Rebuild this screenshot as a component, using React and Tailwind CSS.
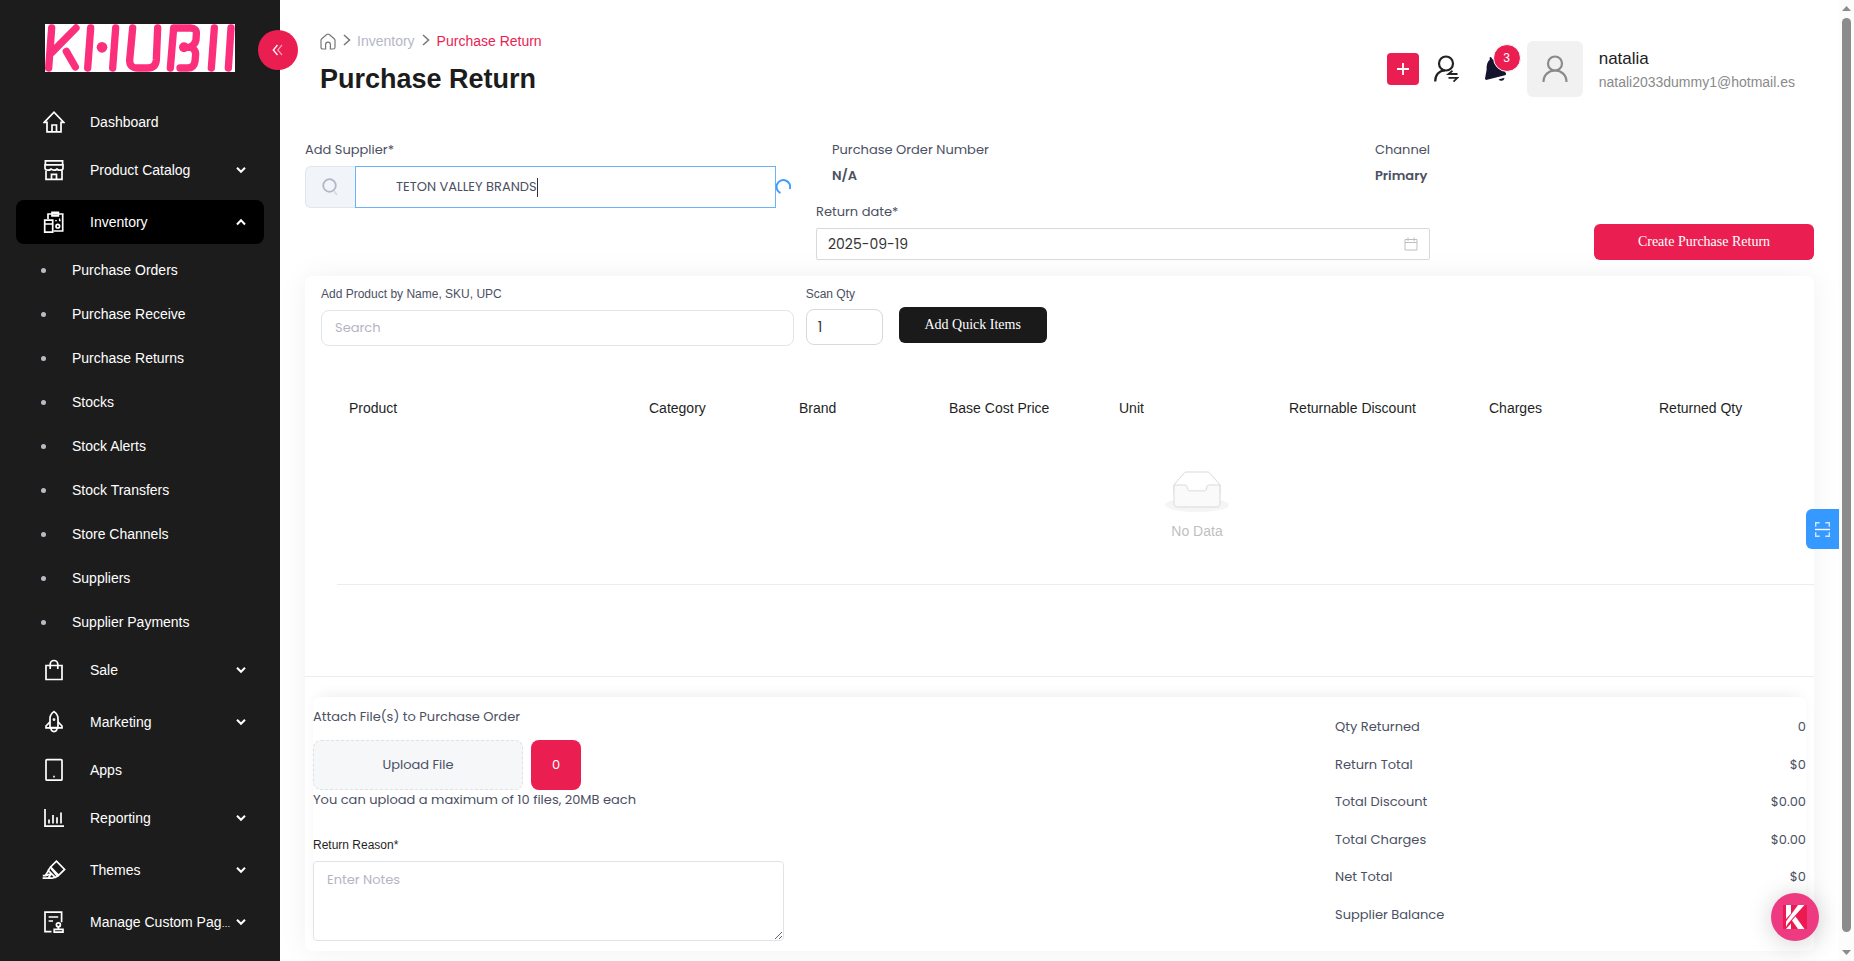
import React from 'react';

const stroke = { fill: 'none', stroke: 'currentColor', strokeWidth: 1.7 };

function HomeIcon() {
  return (
    <svg width="22" height="24" viewBox="0 0 22 24" {...stroke}>
      <path d="M1.2 12.4 11 2.2l9.8 10.2H18v9.4H4v-9.4z" />
      <path d="M9 21.5V15h4.5v6.5" />
    </svg>
  );
}
function StoreIcon() {
  return (
    <svg width="22" height="24" viewBox="0 0 22 24" {...stroke}>
      <path d="M2.4 2.8h17.200v4H2.400zM2 6.800h18v3.400c0 1.200-1.400 2-3 2s-3-.8-3-2c0 1.200-1.400 2-3 2s-3-.8-3-2c0 1.200-1.400 2-3 2s-3-.8-3-2z" />
      <path d="M3 12.600v8.800h16v-8.800M8.500 21.400v-5h5v5" />
    </svg>
  );
}
function InventoryIcon() {
  return (
    <svg width="22" height="24" viewBox="0 0 22 24" {...stroke}>
      <path d="M5 9V4h14.7v17H10.5M9 4V2.4h6.4v3.4H9V4" />
      <path d="M1.7 10.2h8v12h-8zM1.7 14h8" />
      <circle cx="14.8" cy="16.2" r="1.8" />
      <path d="M12.2 10.6h1.6M16 10.6h1.6M16.6 8.6v2" strokeWidth="1.4" />
    </svg>
  );
}
function BagIcon() {
  return (
    <svg width="22" height="24" viewBox="0 0 22 24" {...stroke}>
      <path d="M3 7.5h16v14H3zM7.2 11V6.3a3.8 3.8 0 0 1 7.6 0V11" />
    </svg>
  );
}
function RocketIcon() {
  return (
    <svg width="22" height="24" viewBox="0 0 22 24" {...stroke}>
      <path d="M7 17.6V8.4C7 5.6 9 3 11 1.6c2 1.4 4 4 4 6.8v9.2z" />
      <path d="M7 11.8 3 16v1.8h16V16l-4-4.2M8 17.8c0 2.2 1.4 3.8 3 3.8s3-1.6 3-3.8" />
      <circle cx="11" cy="9.6" r=".6" />
    </svg>
  );
}
function TabletIcon() {
  return (
    <svg width="22" height="24" viewBox="0 0 22 24" {...stroke}>
      <rect x="3" y="1.6" width="16" height="20.6" rx="1" />
      <path d="M10.2 18.6h1.6" />
    </svg>
  );
}
function ChartIcon() {
  return (
    <svg width="22" height="24" viewBox="0 0 22 24" {...stroke}>
      <path d="M2 3v17.2h19M6 17.4v-4M10 17.4V9M14 17.4v-6.2M18 17.4V6.6" />
    </svg>
  );
}
function BrushIcon() {
  return (
    <svg className="shrink-0" width="24" height="24" viewBox="0 0 24 24" {...stroke}>
      <path d="M14.400 3.200 22.600 11.400l-6 6-8-8.400z" />
      <path d="M8.800 9 6.200 12.400l7 7 3.400-2M9.400 10.800l5.800 7.200M6.400 12.800 3.200 17.600H.8M.6 20.200h9.600l3-1M3.600 17.800l5.400-2.200M6.600 19.600l2.600-3.600" />
    </svg>
  );
}
function PageIcon() {
  return (
    <svg width="22" height="24" viewBox="0 0 22 24" {...stroke}>
      <path d="M8.5 21.6H2V2.2h16.6v10M5.6 7h9.6M5.6 11h4.4" />
      <circle cx="15.4" cy="14.8" r="2" />
      <path d="M15.4 16.8v2.4M11.2 19.4h8.8v2.8h-8.8z" />
    </svg>
  );
}

function Chevron({ up }) {
  return (
    <svg className="shrink-0" width="10" height="10" viewBox="0 0 10 10" fill="none" stroke="currentColor" strokeWidth="2">
      {up ? <path d="M1 7.5 5 3.2l4 4.3" /> : <path d="M1 2.8 5 6.8l4-4" />}
    </svg>
  );
}

const inventoryLinks = [
  'Purchase Orders',
  'Purchase Receive',
  'Purchase Returns',
  'Stocks',
  'Stock Alerts',
  'Stock Transfers',
  'Store Channels',
  'Suppliers',
  'Supplier Payments',
];

const menuTop = [
  { label: 'Dashboard', icon: HomeIcon },
  { label: 'Product Catalog', icon: StoreIcon, group: true },
];
const menuBottom = [
  { label: 'Sale', icon: BagIcon, group: true },
  { label: 'Marketing', icon: RocketIcon, group: true, last: true },
  { label: 'Apps', icon: TabletIcon },
  { label: 'Reporting', icon: ChartIcon, group: true },
  { label: 'Themes', icon: BrushIcon, group: true },
  { label: 'Manage Custom Pag', icon: PageIcon, group: true, shortened: true },
];

function MenuItem({ item, open }) {
  const Icon = item.icon;
  const cls =
    'flex h-11 w-full shrink-0 items-center rounded-lg pr-[18px] pl-[27px] text-left text-sm text-white ' +
    (open ? 'bg-black ' : '');
  const body = (
    <>
      <span className="flex w-[22px] shrink-0 justify-center">
        <Icon />
      </span>
      <span className="ml-[25px] min-w-0 flex-1 whitespace-nowrap">
        {item.label}
        {item.shortened && <span className="text-[9px]">…</span>}
      </span>
      {item.group && <Chevron up={open} />}
    </>
  );
  return (
    <li className={item.group && !item.last && !open ? 'pb-1' : ''}>
      {item.group ? (
        <button type="button" className={cls}>
          {body}
        </button>
      ) : (
        <a href="#" className={cls}>
          {body}
        </a>
      )}
    </li>
  );
}

function Logo() {
  return (
    <svg className="block" width="190" height="48" viewBox="0 0 570 144" role="img" aria-label="Khubii">
      <rect width="570" height="144" fill="#fff" />
      <g fill="none" stroke="#fb2f7b" strokeWidth="22" strokeLinecap="round" strokeLinejoin="round">
        <path d="M20 12 11 132M93 12 20 86M64 82 91 129" />
        <path d="M137 12 128 132M212 12 203 132" />
        <path d="M263 12 254 108Q253 132 278 132H308Q332 132 334 108L338 12" />
        <path d="M376 132 386 12H436Q456 12 454 30L453 48Q450 62 436 69Q452 76 452 90L450 112Q447 132 428 132H405" />
        <path d="M508 12 499 132M558 12 550 132" />
        <path d="M434 70h-16" />
      </g>
      <circle cx="171" cy="70" r="16" fill="#fb2f7b" />
      <circle cx="417" cy="70" r="15" fill="#fb2f7b" />
    </svg>
  );
}

function Sidebar() {
  return (
    <aside className="relative w-[280px] shrink-0 bg-[#1c1c1c] text-white">
      <div className="h-full overflow-hidden px-4">
        <div className="pt-6 pl-[29px]">
          <Logo />
        </div>
        <nav aria-label="Main" className="pt-7">
          <ul className="flex flex-col gap-1">
            {menuTop.map((item) => (
              <MenuItem key={item.label} item={item} />
            ))}
            <MenuItem item={{ label: 'Inventory', icon: InventoryIcon, group: true }} open />
            <li>
              <ul>
                {inventoryLinks.map((label) => (
                  <li key={label}>
                    <a href="#" className="flex h-11 items-center gap-[26px] pl-[25px] text-sm">
                      <span className="h-[5px] w-[5px] rounded-full bg-[#b8bac4]" />
                      {label}
                    </a>
                  </li>
                ))}
              </ul>
            </li>
            {menuBottom.map((item) => (
              <MenuItem key={item.label} item={item} />
            ))}
            <li>
              <a href="#" aria-label="Settings" className="flex h-11 items-center pl-[27px]">
                <svg width="22" height="24" viewBox="0 0 22 24" {...stroke}>
                  <circle cx="11" cy="11" r="9.500" />
                </svg>
              </a>
            </li>
          </ul>
        </nav>
      </div>
      <button
        type="button"
        aria-label="Collapse menu"
        className="absolute top-[30px] -right-[18px] z-10 flex h-10 w-10 items-center justify-center rounded-full bg-[#eb1e51] text-white"
      >
        <svg width="12" height="12" viewBox="0 0 12 12" fill="none" stroke="currentColor" strokeWidth="1.3">
          <path d="M5.500 1 1.300 6l4.200 5" />
          <path d="M10 1 5.800 6l4.200 5" opacity=".55" />
        </svg>
      </button>
    </aside>
  );
}

function CrumbChevron() {
  return (
    <svg className="mb-0.5" width="8" height="12" viewBox="0 0 8 12" fill="none" stroke="#7a7a7a" strokeWidth="1.6">
      <path d="M1 1l5.500 5L1 11" />
    </svg>
  );
}

function Header() {
  return (
    <header className="flex justify-between pr-[25px] pl-10">
      <div className="pt-8">
        <nav aria-label="Breadcrumb" className="flex h-[18px] items-center text-sm">
          <a href="#" aria-label="Home">
            <svg width="16" height="17" viewBox="0 0 16 17" fill="none" stroke="#777" strokeWidth="1.2">
              <path d="M5.6 16H2.8Q1 16 1 14.200V7.400Q1 6.400 1.800 5.700L6.700 1.500Q8 .5 9.300 1.500L14.200 5.700Q15 6.400 15 7.400V14.200Q15 16 13.200 16H10.400V11.500Q10.400 9.200 8 9.200Q5.600 9.200 5.600 11.500Z" />
            </svg>
          </a>
          <span className="mr-1.5 ml-[7px]">
            <CrumbChevron />
          </span>
          <a href="#" className="text-[#b5b7c8]">
            Inventory
          </a>
          <span className="mx-[7px]">
            <CrumbChevron />
          </span>
          <span className="text-[#eb1e51]">Purchase Return</span>
        </nav>
        <h1 className="mt-[13px] text-[27px] leading-8 font-bold text-[#1c1c1c]">Purchase Return</h1>
      </div>
      <div className="flex items-center self-start pt-[41px]">
        <button type="button" aria-label="Add" className="flex h-8 w-8 items-center justify-center rounded bg-[#eb1e51] text-white">
          <svg width="12" height="12" viewBox="0 0 12 12" stroke="currentColor" strokeWidth="1.8">
            <path d="M0 6h12M6 0v12" />
          </svg>
        </button>
        <button type="button" aria-label="Switch user" className="ml-[14px]">
          <svg width="26" height="28" viewBox="0 0 26 28" fill="none" stroke="#222" strokeWidth="2.2">
            <circle cx="13" cy="8.500" r="7" />
            <path d="M2.200 26.500C2.200 20 6 15.500 12 15.500" />
            <path d="M24.500 19H15.500L19.500 15.800M15.500 22.800H24.500L20.500 26.600" strokeWidth="1.800" />
          </svg>
        </button>
        <button type="button" aria-label="Notifications" className="relative ml-[25px]">
          <svg width="23" height="26" viewBox="0 0 23 26" fill="#14142f">
            <path d="M1 22.500 2.600 14C2.300 9 3.600 5.500 5.800 3.800L5.600 1.400Q7 .4 7.800 2.200L8.600 3.400C13 2.800 17 6.500 18.400 11L22 17.500Q22.400 19 21 19.300L3 23.800Q1.200 24.200 1 22.500Z" />
            <path d="M14.500 23.400 20.500 21.800Q20 24.800 17.500 24.800 15.500 24.800 14.500 23.400Z" />
          </svg>
          <span className="absolute -top-3 left-[9px] flex h-7 w-7 items-center justify-center rounded-full border border-white bg-[#eb1e51] text-xs text-white">
            3
          </span>
        </button>
        <span className="ml-5 flex h-14 w-14 items-center justify-center rounded-md bg-[#f1f1f1]">
          <svg width="26" height="28" viewBox="0 0 26 28" fill="none" stroke="#8a8a8a" strokeWidth="2.200">
            <circle cx="13" cy="8.500" r="7" />
            <path d="M1.500 27C1.500 20 6.500 15.500 13 15.500S24.500 20 24.500 27" />
          </svg>
        </span>
        <div className="ml-4 pt-0.5 pr-[19px]">
          <p className="text-[17px] leading-6 text-[#1c1c1c]">natalia</p>
          <p className="text-sm leading-[22px] text-[#8a8a8a]">natali2033dummy1@hotmail.es</p>
        </div>
      </div>
    </header>
  );
}

function SupplierRow() {
  return (
    <section className="grid grid-cols-[471fr_40fr_614fr_384fr] px-[25px] font-['Poppins','Inter',sans-serif] text-[13px] text-[#4b5063]">
      <div>
        <label htmlFor="supplier" className="block leading-[22px]">
          Add Supplier*
        </label>
        <div className="relative mt-[5px] flex h-[42px]">
          <span className="flex w-[50px] shrink-0 items-center justify-center rounded-l-md border border-r-0 border-[#e1e6ec] bg-[#f1f5f9]">
            <svg width="18" height="18" viewBox="0 0 18 18" fill="none" strokeWidth="1.800">
              <circle cx="7.500" cy="7.500" r="6.300" stroke="#b5b5c8" />
              <path d="M12 13l3 4" stroke="#dadae4" />
            </svg>
          </span>
          <input
            id="supplier"
            type="text"
            defaultValue="TETON VALLEY BRANDS"
            className="min-w-0 flex-1 border border-[#6bb2f8] bg-white pl-10 text-[13px] outline-none"
          />
          <span className="absolute top-3 left-[232px] h-[19px] w-px bg-[#333]" />
          <svg className="absolute top-3 -right-[15px]" width="16" height="17" viewBox="0 0 16 17" fill="none" stroke="#409eff" strokeWidth="2">
            <path d="M5.500 15A6.800 6.800 0 1 1 14.800 11" />
          </svg>
        </div>
      </div>
      <div />
      <div>
        <dl className="flex justify-between pl-4">
          <div>
            <dt className="leading-[22px]">Purchase Order Number</dt>
            <dd className="mt-1 leading-[22px] font-semibold">N/A</dd>
          </div>
          <div>
            <dt className="leading-[22px]">Channel</dt>
            <dd className="mt-1 leading-[22px] font-semibold">Primary</dd>
          </div>
        </dl>
        <label htmlFor="return-date" className="mt-[14px] block leading-[22px]">
          Return date*
        </label>
        <div className="mt-[5px] flex h-8 items-center rounded-xs border border-[#d9d9d9] bg-white px-[11px]">
          <input
            id="return-date"
            type="text"
            defaultValue="2025-09-19"
            className="min-w-0 flex-1 text-sm text-[#333] outline-none"
          />
          <svg width="14" height="14" viewBox="0 0 14 14" fill="none" stroke="#bfbfbf">
            <path d="M1 2.500h12v10.500H1zM1 5.500h12M4 .5v3.500M10 .5v3.500" />
          </svg>
        </div>
      </div>
      <div className="flex items-end justify-end">
        <button
          type="button"
          className="h-9 w-[220px] rounded-md bg-[#eb1e51] font-['Liberation_Serif',serif] text-sm text-white"
        >
          Create Purchase Return
        </button>
      </div>
    </section>
  );
}

const columns = [
  { label: 'Product', width: 'w-[300px]' },
  { label: 'Category', width: 'w-[150px]' },
  { label: 'Brand', width: 'w-[150px]' },
  { label: 'Base Cost Price', width: 'w-[170px]' },
  { label: 'Unit', width: 'w-[170px]' },
  { label: 'Returnable Discount', width: 'w-[200px]' },
  { label: 'Charges', width: 'w-[170px]' },
  { label: 'Returned Qty', width: 'w-[410px]' },
];

function ProductTable() {
  return (
    <div className="mt-10 ml-8 overflow-hidden">
      <table className="w-[1720px] table-fixed border-collapse text-sm">
        <thead>
          <tr>
            {columns.map((c) => (
              <th key={c.label} className={`${c.width} h-11 px-3 text-left font-normal text-[#1f1f1f]`}>
                {c.label}
              </th>
            ))}
          </tr>
        </thead>
        <tbody>
          <tr className="border-b border-[#ececec]">
            <td colSpan={8} className="pt-[41px] pb-[42px]">
              <div className="flex flex-col items-center text-[#bfbfbf]">
                <svg width="64" height="41" viewBox="0 0 64 41">
                  <g transform="translate(0 1)" fill="none" fillRule="evenodd">
                    <ellipse fill="#f5f5f5" cx="32" cy="33" rx="32" ry="7" />
                    <g stroke="#d9d9d9">
                      <path d="M55 12.76L44.854 1.258C44.367.474 43.656 0 42.907 0H21.093c-.749 0-1.460.474-1.947 1.257L9 12.761V22h46v-9.240z" />
                      <path
                        d="M41.613 15.931c0-1.605.994-2.930 2.227-2.931H55v18.137C55 33.260 53.680 35 52.050 35h-40.100C10.320 35 9 33.259 9 31.137V13h11.160c1.233 0 2.227 1.323 2.227 2.928v.022c0 1.605 1.005 2.901 2.237 2.901h14.752c1.232 0 2.237-1.308 2.237-2.913v-.007z"
                        fill="#fafafa"
                      />
                    </g>
                  </g>
                </svg>
                <p className="mt-2 leading-[22px]">No Data</p>
              </div>
            </td>
          </tr>
        </tbody>
      </table>
    </div>
  );
}

const totals = [
  ['Qty Returned', '0'],
  ['Return Total', '$0'],
  ['Total Discount', '$0.00'],
  ['Total Charges', '$0.00'],
  ['Net Total', '$0'],
  ['Supplier Balance', ''],
];

function Summary() {
  return (
    <div className="overflow-hidden px-2 pt-5">
      <div className="grid grid-cols-[471fr_551fr_471fr] rounded-md bg-white pb-[10px] font-['Poppins','Inter',sans-serif] text-[13px] text-[#4b5063] shadow-[0_-6px_14px_-6px_rgba(0,0,0,0.09)]">
        <div>
          <p className="pt-[9px] leading-[22px]">Attach File(s) to Purchase Order</p>
          <div className="mt-3 flex gap-2">
            <label
              htmlFor="attachment"
              className="flex h-[50px] w-[210px] items-center justify-center rounded-lg border border-dashed border-[#dfe1e6] bg-[#f5f7f9]"
            >
              Upload File
              <input id="attachment" type="file" multiple className="sr-only" />
            </label>
            <button type="button" className="h-[50px] w-[50px] rounded-lg bg-[#eb1e51] text-white">
              0
            </button>
          </div>
          <p className="leading-5 whitespace-nowrap">You can upload a maximum of 10 files, 20MB each</p>
          <label
            htmlFor="reason"
            className="mt-6 block font-['Liberation_Sans',sans-serif] text-xs leading-[22px] text-[#1f1f1f]"
          >
            Return Reason*
          </label>
          <textarea
            id="reason"
            placeholder="Enter Notes"
            className="mt-[5px] block h-20 w-full resize rounded border border-[#e1e3ea] px-[13px] py-2 leading-5 outline-none placeholder:text-[#b5b5c3]"
          />
        </div>
        <div />
        <dl className="flex flex-col justify-between pt-[19px] pb-[15px]">
          {totals.map(([label, value]) => (
            <div key={label} className="flex justify-between leading-[22px]">
              <dt>{label}</dt>
              <dd>{value}</dd>
            </div>
          ))}
        </dl>
      </div>
    </div>
  );
}

function PageScroll() {
  return (
    <div aria-hidden="true" className="flex w-[15px] shrink-0 flex-col items-center bg-[#fcfcfc] py-1.5">
      <svg width="9" height="5" viewBox="0 0 9 5" fill="#8b8b8b">
        <path d="M4.500 0 9 5H0z" />
      </svg>
      <span className="mt-[7px] mb-[18px] w-[9px] flex-1 rounded-full bg-[#8b8b8b]" />
      <svg width="9" height="5" viewBox="0 0 9 5" fill="#8b8b8b">
        <path d="M4.500 5 9 0H0z" />
      </svg>
    </div>
  );
}

export default function App() {
  return (
    <div className="relative flex h-screen overflow-hidden bg-white font-['Liberation_Sans',Arial,sans-serif]">
      <Sidebar />
      <main className="min-w-0 flex-1 overflow-hidden">
        <Header />
        <div className="mt-[42px]">
          <SupplierRow />
        </div>
        <div className="mt-4 px-[25px]">
          <section className="rounded-md bg-white shadow-[0_0_30px_rgba(0,0,0,0.06)]">
            <div className="flex items-start px-4 pt-[7px] text-[#4b5063]">
              <div className="w-[32%]">
                <label htmlFor="product" className="block text-xs leading-[22px]">
                  Add Product by Name, SKU, UPC
                </label>
                <input
                  id="product"
                  type="text"
                  placeholder="Search"
                  className="mt-[5px] h-9 w-full rounded-lg border border-[#e1e6ec] px-[13px] font-['Poppins','Inter',sans-serif] text-[13px] outline-none placeholder:text-[#b5b5c3]"
                />
              </div>
              <div className="ml-3">
                <label htmlFor="scan-qty" className="block text-xs leading-[22px]">
                  Scan Qty
                </label>
                <input
                  id="scan-qty"
                  type="text"
                  defaultValue="1"
                  className="mt-1 h-9 w-[77px] rounded-lg border border-[#d9d9d9] px-[11px] font-['Poppins','Inter',sans-serif] text-sm text-[#333] outline-none"
                />
              </div>
              <button
                type="button"
                className="mt-6 ml-4 h-9 w-[148px] rounded-md bg-[#1a1a1a] font-['Liberation_Serif',serif] text-sm text-white"
              >
                Add Quick Items
              </button>
            </div>
            <ProductTable />
            <div className="mt-[91px] border-t border-[#ececec]">
              <Summary />
            </div>
          </section>
        </div>
      </main>
      <PageScroll />
      <button
        type="button"
        aria-label="Scan"
        className="absolute top-[509px] right-[15px] flex h-10 w-[33px] items-center justify-center rounded-l-md bg-[#3699ff] text-white"
      >
        <svg width="15" height="15" viewBox="0 0 15 15" fill="none" stroke="#cfe6ff" strokeWidth="1.400">
          <path d="M.7 4.800V.7h4M10.300.7h4v4.100M14.300 10.200v4.100h-4M4.700 14.300h-4v-4.100" />
          <path d="M0 7.500h15" stroke="#fff" />
        </svg>
      </button>
      <button
        type="button"
        aria-label="Open chat"
        className="absolute right-[35px] bottom-5 flex h-12 w-12 items-center justify-center rounded-full bg-[#ee3a80] shadow-[0_2px_24px_rgba(0,0,0,0.18)]"
      >
        <svg width="24" height="24" viewBox="0 0 24 24">
          <rect width="24" height="24" fill="#eb1a50" />
          <path d="M3 0h5v8.500L3 14zM15 0h6.500L5 18.500 3 22V16.500zM3 24 8 18.500V24zM9 15.500l3.500-4L21.500 24H15z" fill="#fff" />
        </svg>
      </button>
    </div>
  );
}
